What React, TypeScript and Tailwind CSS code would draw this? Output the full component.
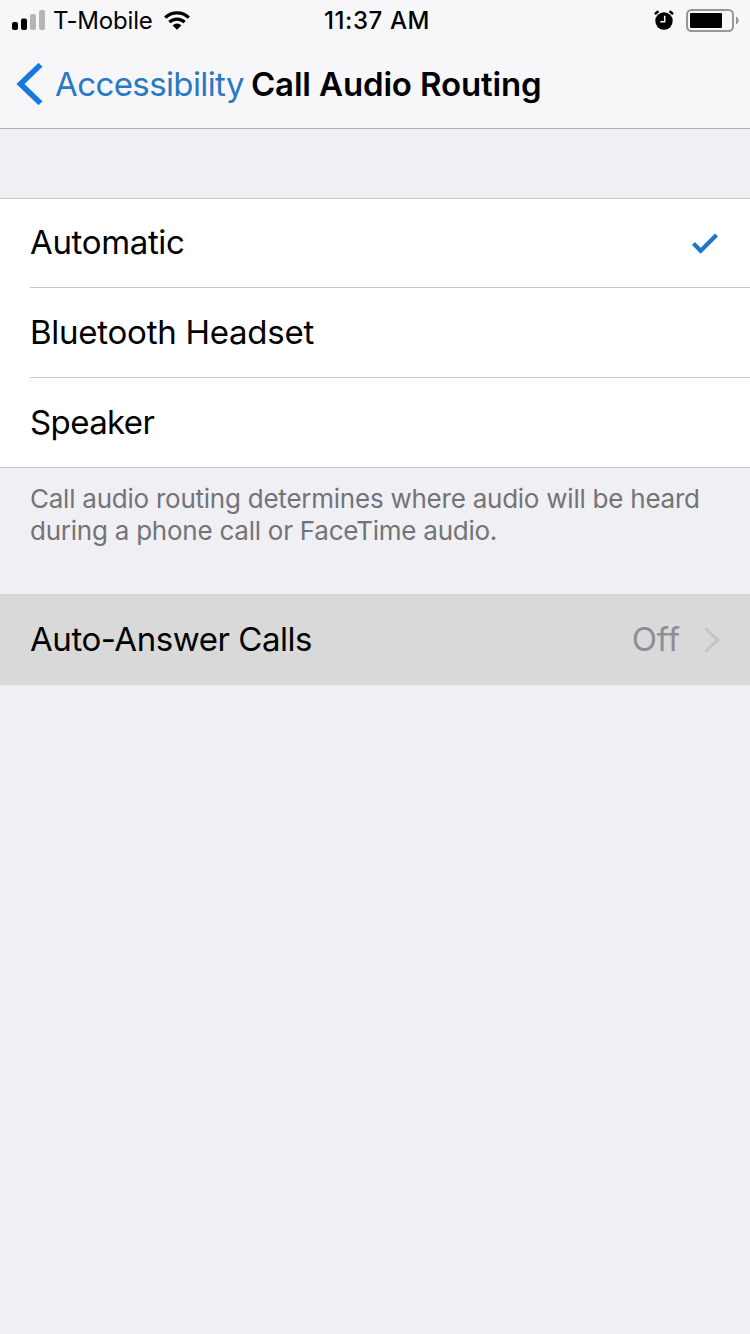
import type { ReactNode } from 'react'
import { clsx } from 'clsx'

const SignalIcon = () => (
  <svg width="34" height="22" viewBox="0 0 34 22">
    <rect x="0" y="13" width="6" height="8" rx="2" fill="#000" />
    <rect x="9" y="9.500" width="6" height="11.500" rx="2" fill="#000" />
    <rect x="18" y="5" width="6" height="16" rx="2" fill="#b5b5b7" />
    <rect x="27" y="1" width="6" height="20" rx="2" fill="#b5b5b7" />
  </svg>
)

const WifiIcon = () => (
  <svg width="26" height="19" viewBox="0 0 26 19" fill="none" stroke="#000" strokeWidth="3.200">
    <path d="M1.200 6.700A16.700 16.700 0 0 1 24.800 6.700" />
    <path d="M5.400 11.200A10.700 10.700 0 0 1 20.600 11.200" />
    <path d="M13 18.800L8.600 14.400A6 6 0 0 1 17.400 14.400Z" fill="#000" stroke="none" />
  </svg>
)

const AlarmIcon = () => (
  <svg width="20" height="20" viewBox="0 0 20 20" fill="none">
    <circle cx="10" cy="11" r="8.700" fill="#000" />
    <path d="M1 4.200A11 11 0 0 1 4.600 1.400M15.400 1.400A11 11 0 0 1 19 4.200" stroke="#000" strokeWidth="2.400" />
    <path d="M10.700 5.800V11.700H6.300" stroke="#f7f7f9" strokeWidth="1.500" />
  </svg>
)

const BatteryIcon = () => (
  <svg width="53" height="23" viewBox="0 0 53 23">
    <rect x="1" y="1" width="46" height="21" rx="4.500" fill="none" stroke="#97979a" strokeWidth="2" />
    <rect x="4" y="4" width="32" height="15" rx="1" fill="#000" />
    <path d="M50 7.500C53.500 9 53.500 14 50 15.500Z" fill="#97979a" />
  </svg>
)

const StatusBar = () => (
  <div className="grid h-10 grid-cols-3 items-center">
    <div className="flex items-center pl-3">
      <SignalIcon />
      <span className="ml-[7px] pt-0.5 text-[24px] leading-[38px] tracking-[-0.2px] whitespace-nowrap">T-Mobile</span>
      <span className="ml-[11px]">
        <WifiIcon />
      </span>
    </div>
    <span className="pt-0.5 pl-1 text-center text-[24px] leading-[38px] font-medium tracking-[0.6px]">11:37 AM</span>
    <div className="flex items-center justify-end gap-3 pr-[11px]">
      <AlarmIcon />
      <BatteryIcon />
    </div>
  </div>
)

const NavBar = () => (
  <div className="flex h-22 items-center pl-4">
    <svg width="28" height="42" viewBox="0 0 28 42" fill="none">
      <path d="M24.500 1.800L4.500 21L24.500 40.200" stroke="#1579e0" strokeWidth="5.600" />
    </svg>
    <a className="ml-[11px] text-[33px] leading-10 tracking-[-0.6px] text-[#2779c6]">Accessibility</a>
    <h1 className="ml-[7px] text-[33px] leading-10 font-semibold tracking-[-0.15px] whitespace-nowrap">
      Call Audio Routing
    </h1>
  </div>
)

interface OptionProps {
  children: ReactNode
  selected?: boolean
  className?: string
}

const Option = ({ children, selected, className }: OptionProps) => (
  <li
    className={clsx(
      'flex items-center justify-between border-[#c8c7cc] pr-8 text-[33px] leading-10',
      className
    )}
  >
    <span className="pb-0.5">{children}</span>
    {selected && (
      <svg width="26" height="21" viewBox="0 0 26 21" fill="none">
        <path d="M1.500 10.500L8.700 17.700L24.500 2" stroke="#1b76cc" strokeWidth="4.200" />
      </svg>
    )}
  </li>
)

export default function App() {
  return (
    <div className="h-[1334px] w-[750px] overflow-hidden bg-[#efeff4] font-['Inter','Liberation_Sans',sans-serif] text-black">
      <header className="h-[129px] border-b border-[#b0b0b4] bg-[#f7f7f9]">
        <StatusBar />
        <NavBar />
      </header>
      <main className="pt-[69px]">
        <ul className="h-[270px] border-y border-[#c8c7cc] bg-white pl-[30px]">
          <Option selected className="h-[89px] border-b tracking-[-0.35px]">
            Automatic
          </Option>
          <Option className="h-[90px] border-b tracking-[-0.25px]">Bluetooth Headset</Option>
          <Option className="h-[89px] tracking-[-0.6px]">Speaker</Option>
        </ul>
        <p className="mt-[15px] pl-[30px] text-[26px] leading-8 tracking-[-0.24px] text-[#737378]">
          Call audio routing determines where audio will be heard
          <br />
          during a phone call or FaceTime audio.
        </p>
        <div className="mt-[47px] flex h-[91px] items-center border-y border-[#d4d4d6] bg-[#d9d9d9] px-[30px] text-[33px] leading-10">
          <span className="grow pb-0.5 tracking-[-0.45px]">Auto-Answer Calls</span>
          <span className="pb-0.5 text-[#8e8e93]">Off</span>
          <svg className="ml-6" width="16" height="26" viewBox="0 0 16 26" fill="none">
            <path d="M1.500 1.500L13.500 13L1.500 24.500" stroke="#c4c4c8" strokeWidth="3" />
          </svg>
        </div>
      </main>
    </div>
  )
}
